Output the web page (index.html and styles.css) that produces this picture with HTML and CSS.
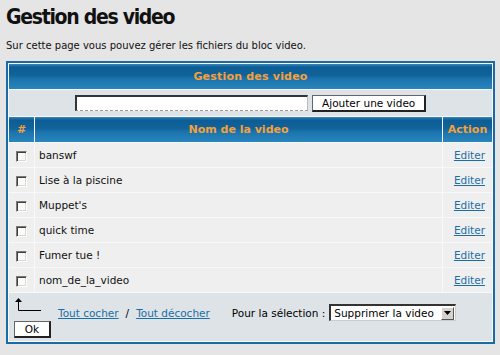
FILE: index.html
```html
<!DOCTYPE html>
<html lang="fr">
<head>
    <meta charset="UTF-8">
    <title>Gestion des video</title>
    <link rel="stylesheet" href="styles.css">
</head>
<body>

<h1 class="pageTitle">Gestion des video</h1>
<p class="intro">Sur cette page vous pouvez gérer les fichiers du bloc video.</p>

<form class="videoForm" onsubmit="return false;">
<table class="forumline">
    <tr>
        <th colspan="3" class="catTitle">Gestion des video</th>
    </tr>
    <tr>
        <td colspan="3" class="rowAdd">
            <input type="text" class="post">
            <button type="button" class="btn btnAdd">Ajouter une video</button>
        </td>
    </tr>
    <tr class="colHead">
        <th class="colNum">#</th>
        <th>Nom de la video</th>
        <th class="colAction">Action</th>
    </tr>
    <tr class="row">
        <td class="cellCheck"><input type="checkbox" class="check"></td>
        <td class="cellName">banswf</td>
        <td class="cellAction"><a href="#">Editer</a></td>
    </tr>
    <tr class="row">
        <td class="cellCheck"><input type="checkbox" class="check"></td>
        <td class="cellName">Lise à la piscine</td>
        <td class="cellAction"><a href="#">Editer</a></td>
    </tr>
    <tr class="row">
        <td class="cellCheck"><input type="checkbox" class="check"></td>
        <td class="cellName">Muppet's</td>
        <td class="cellAction"><a href="#">Editer</a></td>
    </tr>
    <tr class="row">
        <td class="cellCheck"><input type="checkbox" class="check"></td>
        <td class="cellName">quick time</td>
        <td class="cellAction"><a href="#">Editer</a></td>
    </tr>
    <tr class="row">
        <td class="cellCheck"><input type="checkbox" class="check"></td>
        <td class="cellName">Fumer tue !</td>
        <td class="cellAction"><a href="#">Editer</a></td>
    </tr>
    <tr class="row">
        <td class="cellCheck"><input type="checkbox" class="check"></td>
        <td class="cellName">nom_de_la_video</td>
        <td class="cellAction"><a href="#">Editer</a></td>
    </tr>
    <tr>
        <td colspan="3" class="rowFoot">
            <div class="footLine">
                <svg class="arrow" width="30" height="16" viewBox="0 0 30 16">
                    <path d="M4.5 3 V13.5 H27" fill="none" stroke="#000" stroke-width="1"/>
                    <path d="M1 5 L4.5 1 L8 5 Z" fill="#000"/>
                </svg>
                <a href="#" class="checkLink">Tout cocher</a>
                <span class="sep">/</span>
                <a href="#" class="checkLink">Tout décocher</a>
                <span class="selLabel">Pour la sélection :</span>
                <span class="selectBox">
                    <span class="selectText">Supprimer la video</span>
                    <span class="selectBtn"><svg width="7" height="4" viewBox="0 0 7 4"><path d="M0 0 H7 L3.5 4 Z" fill="#000"/></svg></span>
                </span>
            </div>
            <button type="button" class="btn btnOk">Ok</button>
        </td>
    </tr>
</table>
</form>

</body>
</html>
```

FILE: styles.css
```css
body {
    font-family: 'DejaVu Sans', Verdana, sans-serif;
    margin: 0;
    padding: 0 6px;
    background-color: #e5e5e5;
    color: #000;
}

.pageTitle {
    font-family: 'DejaVu Sans Condensed', 'DejaVu Sans', Verdana, sans-serif;
    font-size: 21px;
    font-weight: bold;
    margin: 0;
    padding: 5px 0 0 0;
    height: 30px;
    letter-spacing: -1.3px;
    color: #111;
}

.intro {
    font-size: 10px;
    margin: 5px 0 10px 0;
    color: #111;
}

.videoForm {
    margin: 0;
}

.forumline {
    width: 489px;
    margin-left: 0;
    border: 2px solid #1a6aa3;
    border-spacing: 1px;
    background-color: #f7f8f9;
    font-size: 10.5px;
}

.forumline th {
    color: #f7a03a;
    font-weight: bold;
    font-size: 11px;
    height: 25px;
    padding: 0;
    background: linear-gradient(#3987bb 0, #0c5d95 12%, #106399 45%, #1c74ad 60%, #2885bd 100%);
}

.catTitle {
    letter-spacing: 0.2px;
}

.rowAdd {
    background-color: #dee3e7;
    height: 26px;
    padding: 0;
    text-align: center;
}

.post {
    width: 226px;
    height: 13px;
    padding: 0 2px;
    margin: 0 1px 0 0;
    border: 1px solid #bbb;
    border-top: 2px solid #333;
    border-left: 2px solid #333;
    border-bottom: 1px dashed #999;
    background: #fff;
    vertical-align: middle;
}

.btn {
    font-family: 'DejaVu Sans', Verdana, sans-serif;
    font-size: 10.5px;
    background: #fff;
    color: #000;
    border: 1px solid #666;
    border-right: 2px solid #222;
    border-bottom: 2px solid #222;
    padding: 0 8px;
    vertical-align: middle;
    cursor: pointer;
}

.btnAdd {
    height: 17px;
    width: 114px;
}

.colNum {
    width: 25px;
}

.colAction {
    width: 49px;
}

.row td {
    background-color: #efefef;
    height: 24px;
    padding: 0;
}

.cellCheck {
    text-align: center;
}

.check {
    appearance: none;
    -webkit-appearance: none;
    width: 11px;
    height: 11px;
    margin: 2px 0 0 -1px;
    border-top: 1px solid #7a7a7a;
    border-left: 1px solid #7a7a7a;
    border-right: 1px solid #fff;
    border-bottom: 1px solid #fff;
    box-shadow: inset 1px 1px 0 #404040, inset -1px -1px 0 #d8d8d8;
    background: #fbfbf7;
    vertical-align: middle;
}

.cellName {
    padding-left: 4px !important;
    color: #111;
}

.cellAction {
    text-align: right;
    padding-right: 7px !important;
}

.cellAction a, .checkLink {
    color: #1b6ea6;
    text-decoration: underline;
}

.rowFoot {
    background-color: #dee3e7;
    height: 41px;
    padding: 4px 0 3px 4px;
    vertical-align: top;
}

.footLine {
    display: flex;
    align-items: flex-end;
    height: 24px;
}

.arrow {
    align-self: flex-start;
    margin: 0 14px 0 1px;
}

.checkLink {
    font-size: 10.5px;
    margin-bottom: 2px;
}

.sep {
    margin: 0 7px 2px 7px;
}

.selLabel {
    margin: 0 4px 2px 22px;
}

.selectBox {
    display: flex;
    align-items: center;
    width: 124px;
    height: 14px;
    background: #fff;
    border-top: 2px solid #333;
    border-left: 2px solid #333;
    border-right: 1px solid #ccc;
    border-bottom: 1px solid #ccc;
}

.selectText {
    flex: 1;
    padding-left: 3px;
    font-size: 10.5px;
}

.selectBtn {
    display: flex;
    align-items: center;
    justify-content: center;
    width: 11px;
    height: 11px;
    margin-right: 1px;
    background: #d6d3ce;
    border: 1px solid #fff;
    border-right-color: #555;
    border-bottom-color: #555;
}

.btnOk {
    height: 17px;
    width: 37px;
    padding: 0;
    margin: 0 0 0 1px;
    display: block;
}
```
